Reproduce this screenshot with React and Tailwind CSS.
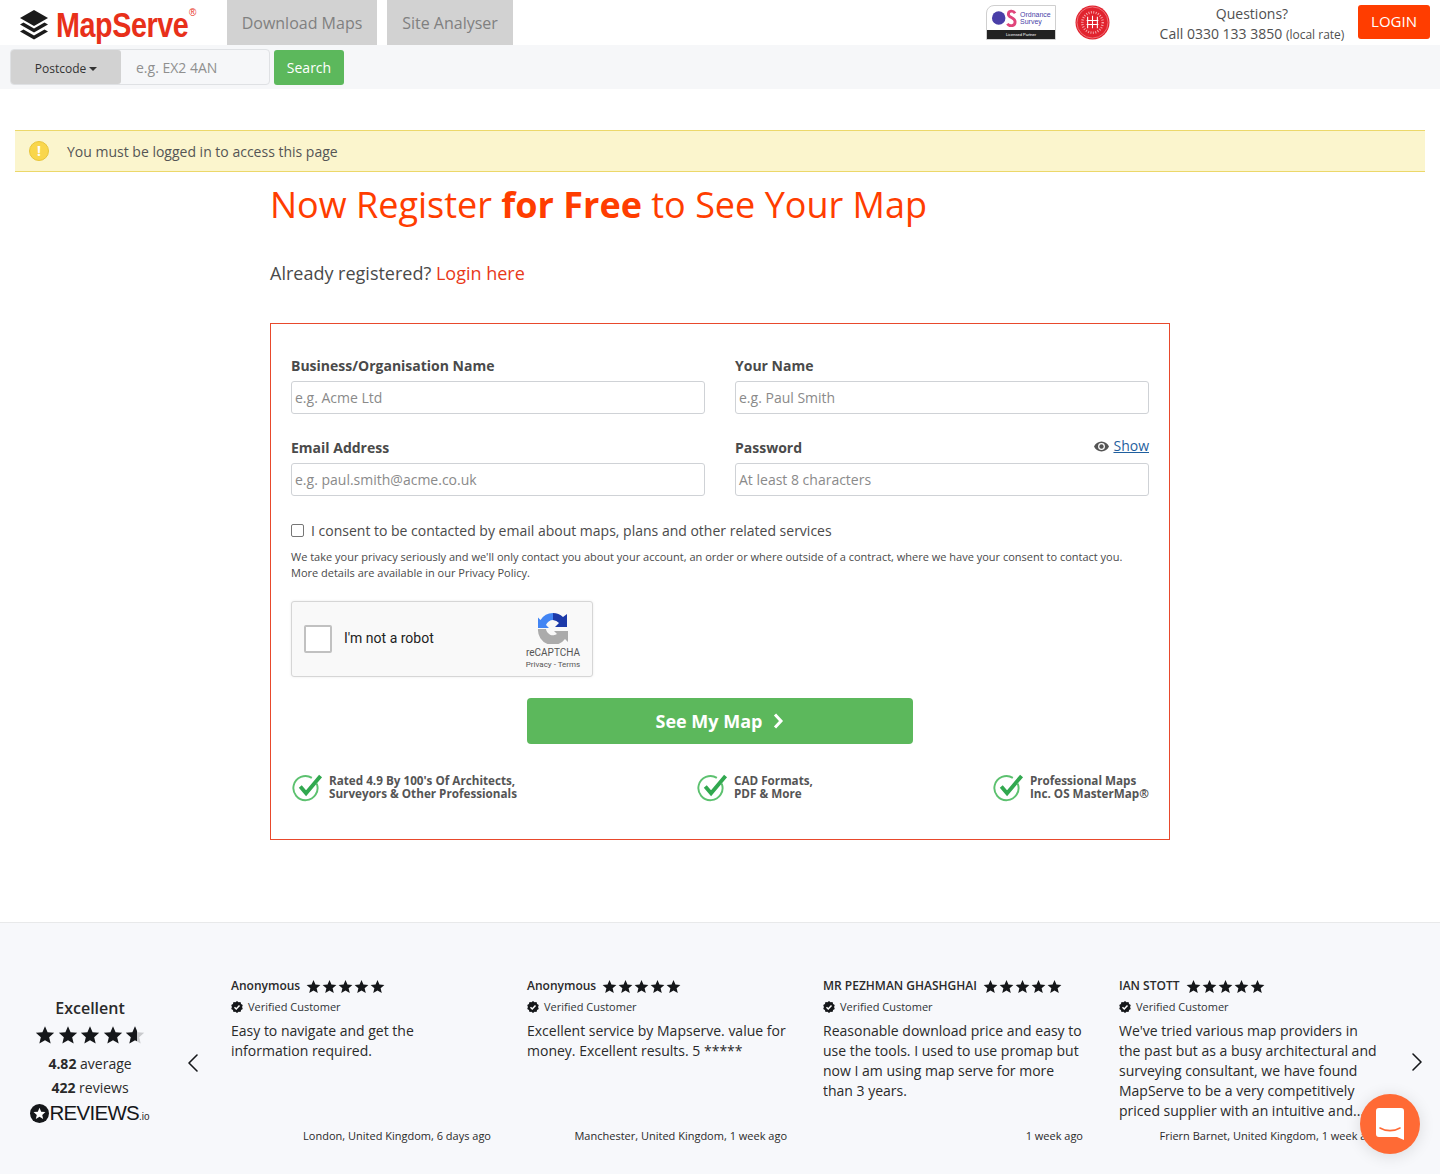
import { ChevronLeft, ChevronRight } from "lucide-react"

const sans = "font-['Open_Sans',sans-serif]"

function Star({ className = "w-[15px] h-[15px]" }) {
  return (
    <svg viewBox="0 0 24 24" className={className} fill="#15171a">
      <path d="M12 1.500l3.100 7.200 7.900.7-6 5.200 1.800 7.700L12 18.200l-6.800 4.100L7 14.600 1 9.400l7.900-.7z" />
    </svg>
  )
}

function BadgeCheck() {
  return (
    <svg viewBox="0 0 24 24" className="w-3 h-3 shrink-0">
      <path fill="#15171a" d="M12 0l3.100 2.400 3.900-.3 1.200 3.700 3.300 2.200L22.200 12l1.300 4-3.300 2.200-1.200 3.700-3.900-.3L12 24l-3.100-2.400-3.900.3-1.200-3.700L.5 16l1.300-4-1.300-4 3.300-2.200L5 2.100l3.900.3z" />
      <path fill="none" stroke="#fff" strokeWidth="3" d="M7 12.500l3.500 3.500L17 9" />
    </svg>
  )
}

function LayersLogo() {
  return (
    <svg viewBox="0 0 28 30" className="w-[28px] h-[30px]" fill="#1b1b1b">
      <path d="M14 0l14 8-14 8L0 8z" />
      <path d="M3.500 12.500L14 18.500l10.500-6 3.500 2-14 8-14-8z" />
      <path d="M3.500 19.500L14 25.500l10.500-6 3.500 2-14 8-14-8z" />
    </svg>
  )
}

function OsBadge() {
  return (
    <div className="w-[70px] h-[35px] flex flex-col border border-[#cfcfcf] rounded-tl-lg bg-white overflow-hidden">
      <div className="flex-1 flex items-center pl-1 gap-[2px]">
        <svg viewBox="0 0 28 18" className="w-[27px] h-[18px]">
          <circle cx="8" cy="9" r="7" fill="#4a3fa8" />
          <path d="M25 4c-2-3-7-3-7 1s7 3 7 8-6 5-8 2" fill="none" stroke="#e0457b" strokeWidth="3" />
        </svg>
        <div className="text-[7px] leading-[7px] text-[#4a3fa8] font-['Liberation_Sans',sans-serif]">
          Ordnance
          <br />
          Survey
        </div>
      </div>
      <div className="h-[9px] bg-[#222] text-[4px] leading-[9px] text-white text-center font-['Liberation_Sans',sans-serif]">
        Licensed Partner
      </div>
    </div>
  )
}

function RedSeal() {
  return (
    <svg viewBox="0 0 36 36" className="w-[35px] h-[35px]">
      <circle cx="18" cy="18" r="17.500" fill="#e1232e" />
      <circle cx="18" cy="18" r="16" fill="none" stroke="#f7a7ab" strokeWidth="0.6" />
      <circle cx="18" cy="18" r="10.500" fill="none" stroke="#f7a7ab" strokeWidth="2.500" strokeDasharray="1 1.500" />
      <path d="M13 12v12M18 11v13M23 12v12M12 16h12M12 20h12" stroke="#fff" strokeWidth="1.100" fill="none" />
    </svg>
  )
}

function CheckIcon() {
  return (
    <svg viewBox="0 0 32 30" className="w-[32px] h-[29px] shrink-0">
      <path d="M25 11a12.500 12.500 0 1 1-5-6" fill="none" stroke="#5cc16f" strokeWidth="2" />
      <path d="M8 14l6 7L29 3" fill="none" stroke="#31a84f" strokeWidth="4" />
    </svg>
  )
}

function Field({ label, placeholder, right }) {
  return (
    <div className="flex-1">
      <div className="flex justify-between items-end h-[22px] mb-[5px]">
        <label className="text-[14px] font-bold text-[#4a4a4a] leading-[20px]">{label}</label>
        {right}
      </div>
      <div className="h-[33px] border border-[#cfd2d6] rounded-[3px] px-[3px] flex items-center text-[14px] text-[#8a8a8a]">
        {placeholder}
      </div>
    </div>
  )
}

function Perk({ lines }) {
  return (
    <div className="flex items-center gap-[5px]">
      <CheckIcon />
      <div className="text-[11.7px] font-bold text-[#555] -mt-[2px]">
        <div className="h-[13px] leading-[13px]">{lines[0]}</div>
        <div className="h-[13px] leading-[13px]">{lines[1]}</div>
      </div>
    </div>
  )
}

function Review({ name, text, where }) {
  return (
    <div className="w-[296px] shrink-0 pr-[36px] h-[172px] flex flex-col">
      <div className="flex items-center gap-[6px] h-[18px]">
        <span className="text-[12px] font-semibold text-[#2a2a2a]">{name}</span>
        <span className="flex gap-[1px]">
          <Star />
          <Star />
          <Star />
          <Star />
          <Star />
        </span>
      </div>
      <div className="flex items-center gap-[5px] h-[16px] mt-[4px] text-[11px] text-[#2f3437]">
        <BadgeCheck />
        Verified Customer
      </div>
      <p className="mt-[6px] text-[14px] leading-[20px] text-[#2a2a2a] h-[100px] overflow-hidden">{text}</p>
      <div className="mt-[7px] text-[11px] text-right text-[#2a2a2a] whitespace-nowrap">{where}</div>
    </div>
  )
}

export default function App() {
  return (
    <div className={`${sans} relative w-[1440px] h-[1174px] overflow-hidden bg-white text-[#4a4a4a]`}>
      <header className="h-[45px] flex items-start">
        <div className="w-[227px] h-[45px] flex items-center pl-[20px] pt-[5px] gap-[8px]">
          <LayersLogo />
          <div className="relative">
            <span className="block origin-left scale-x-[.82] font-['Liberation_Sans',sans-serif] font-bold text-[#e8301a] text-[35px] leading-[36px] tracking-[-0.5px] whitespace-nowrap">
              MapServe
            </span>
            <span className="absolute left-[133px] -top-[2px] text-[10px] text-[#e8301a] font-['Liberation_Sans',sans-serif]">®</span>
          </div>
        </div>
        <div className="w-[150px] h-[45px] bg-[#d2d2d2] flex items-center justify-center text-[16px] text-[#808080]">Download Maps</div>
        <div className="ml-[10px] w-[126px] h-[45px] bg-[#d2d2d2] flex items-center justify-center text-[16px] text-[#808080]">Site Analyser</div>
        <div className="ml-auto flex items-center h-[45px] pr-[10px]">
          <OsBadge />
          <div className="ml-[19px]"><RedSeal /></div>
          <div className="ml-[49px] mt-[4px] w-[186px] text-center text-[14px] leading-[20px] text-[#505050]">
            Questions?
            <br />
            <span className="whitespace-nowrap">Call 0330 133 3850 <span className="text-[12px]">(local rate)</span></span>
          </div>
          <div className="ml-[13px] w-[72px] h-[34px] mb-[2px] bg-[#ff3d00] rounded-[3px] flex items-center justify-center text-white text-[15px]">LOGIN</div>
        </div>
      </header>

      <div className="h-[44px] bg-[#f6f7f9] flex items-center pl-[10px] gap-[4px]">
        <div className="w-[260px] h-[36px] border border-[#dfe1e4] rounded-[4px] flex">
          <div className="w-[110px] pt-[3px] bg-[#d2d2d2] rounded-[3px] flex items-center justify-center gap-[3px] text-[12px] text-[#333]">
            Postcode
            <span className="w-0 h-0 border-x-[4px] border-x-transparent border-t-[4px] border-t-[#333]"></span>
          </div>
          <div className="pl-[15px] flex items-center text-[14px] text-[#8f8f8f]">e.g. EX2 4AN</div>
        </div>
        <div className="w-[70px] h-[35px] bg-[#5cb85c] rounded-[3px] flex items-center justify-center text-white text-[14px]">Search</div>
      </div>

      <div className="mt-[41px] mx-[15px] h-[42px] bg-[#fbf5cd] border-y border-[#ecd86a] flex items-center pl-[14px]">
        <span className="w-[20px] h-[20px] rounded-full bg-[#f9d64c] border border-[#e8c53a] flex items-center justify-center text-white font-bold text-[14px] leading-none">!</span>
        <span className="ml-[18px] text-[14px] text-[#555]">You must be logged in to access this page</span>
      </div>

      <main className="w-[900px] mx-auto">
        <h1 className="mt-[8px] text-[36px] leading-[50px] text-[#ff3d00]">
          Now Register <strong className="font-bold">for Free</strong> to See Your Map
        </h1>
        <p className="mt-[30px] text-[18px] leading-[26px] text-[#4a4a4a]">
          Already registered? <span className="text-[#e8391a]">Login here</span>
        </p>

        <section className="mt-[37px] h-[517px] border border-[#e8492c] px-[20px] pt-[30px]">
          <div className="flex gap-[30px]">
            <Field label="Business/Organisation Name" placeholder="e.g. Acme Ltd" />
            <Field label="Your Name" placeholder="e.g. Paul Smith" />
          </div>
          <div className="flex gap-[30px] mt-[22px]">
            <Field label="Email Address" placeholder="e.g. paul.smith@acme.co.uk" />
            <Field
              label="Password"
              placeholder="At least 8 characters"
              right={
                <span className="flex items-center gap-[4px] text-[14px] leading-[22px] mb-[1px]">
                  <svg viewBox="0 0 24 16" className="w-[15px] h-[11px]" fill="#555">
                    <path fillRule="evenodd" d="M12 0C6.500 0 2 3.500 0 8c2 4.500 6.500 8 12 8s10-3.500 12-8c-2-4.500-6.500-8-12-8zm0 2.500a5.500 5.500 0 1 1 0 11 5.500 5.500 0 0 1 0-11z" />
                    <circle cx="12" cy="8" r="3.500" />
                  </svg>
                  <span className="text-[#1f5f9e] underline">Show</span>
                </span>
              }
            />
          </div>

          <div className="mt-[24px] flex items-center h-[20px] text-[14px] text-[#4a4a4a]">
            <span className="w-[13px] h-[13px] border border-[#767676] rounded-[2px] bg-white mr-[7px]"></span>
            I consent to be contacted by email about maps, plans and other related services
          </div>
          <p className="mt-[9px] text-[11px] leading-[16px] text-[#4a4a4a]">
            We take your privacy seriously and we'll only contact you about your account, an order or where outside of a contract, where we have your consent to contact you.
            <br />
            More details are available in our Privacy Policy.
          </p>

          <div className="mt-[20px] w-[302px] h-[76px] bg-[#f9f9f9] border border-[#d6d6d6] rounded-[3px] shadow-[0_0_3px_rgba(0,0,0,0.08)] flex items-center pl-[12px] font-['Roboto',sans-serif]">
            <span className="w-[28px] h-[28px] bg-white border-2 border-[#c1c1c1] rounded-[2px]"></span>
            <span className="ml-[12px] -mt-[2px] text-[14px] text-[#222]">I'm not a robot</span>
            <div className="ml-auto w-[78px] flex flex-col items-center pt-[5px] text-[#555]">
              <svg viewBox="0 0 32 32" className="w-[32px] h-[32px]">
                <path fill="#1c3aa9" d="M16 1a15 15 0 0 1 10 4l4-3v13H18l4-4a9 9 0 0 0-6-3z" />
                <path fill="#4285f4" d="M16 1A15 15 0 0 0 3.500 8L1 5.500V16h11l-3-3c1-3 4-5 7-5z" />
                <path fill="#ababab" d="M1 17h8a7 7 0 0 0 11 5l-3-3h14v11l-3-3A15 15 0 0 1 1 17z" />
              </svg>
              <span className="text-[10px] leading-[12px] mt-[3px]">reCAPTCHA</span>
              <span className="text-[8px] leading-[12px]">Privacy - Terms</span>
            </div>
          </div>

          <div className="mt-[21px] mx-auto w-[386px] h-[46px] bg-[#5cb85c] rounded-[4px] flex items-center justify-center gap-[10px] text-white text-[18px] font-bold">
            See My Map
            <svg viewBox="0 0 10 16" className="w-[12px] h-[16px]">
              <path d="M2 1.500L8 8l-6 6.500" fill="none" stroke="#fff" strokeWidth="3" />
            </svg>
          </div>

          <div className="mt-[29px] flex justify-between pl-px">
            <Perk lines={["Rated 4.9 By 100's Of Architects,", "Surveyors & Other Professionals"]} />
            <Perk lines={["CAD Formats,", "PDF & More"]} />
            <Perk lines={["Professional Maps", "Inc. OS MasterMap®"]} />
          </div>
        </section>
      </main>

      <footer className="mt-[82px] h-[252px] bg-[#f7f8fb] border-t border-[#e8e9ea] flex text-[#2a2a2a]">
        <div className="w-[180px] pt-[74px] flex flex-col items-center">
          <div className="text-[16px] leading-[22px] font-semibold">Excellent</div>
          <div className="mt-[6px] flex gap-[2.500px]">
            <Star className="w-[20px] h-[20px]" />
            <Star className="w-[20px] h-[20px]" />
            <Star className="w-[20px] h-[20px]" />
            <Star className="w-[20px] h-[20px]" />
            <span className="relative w-[20px] h-[20px]">
              <Star className="w-[20px] h-[20px] opacity-20" />
              <span className="absolute left-0 top-0 w-[12px] h-[20px] overflow-hidden">
                <Star className="w-[20px] h-[20px]" />
              </span>
            </span>
          </div>
          <div className="mt-[7px] text-[14px] leading-[24px]"><b>4.82</b> average</div>
          <div className="text-[14px] leading-[24px]"><b>422</b> reviews</div>
          <div className="flex items-center h-[24px] mt-px">
            <span className="w-[19px] h-[19px] rounded-full bg-[#15171a] flex items-center justify-center">
              <Star className="w-[13px] h-[13px] [&>path]:fill-white" />
            </span>
            <span className="text-[20.500px] tracking-[-0.7px] text-[#15171a] font-['Liberation_Sans',sans-serif]">REVIEWS</span>
            <span className="text-[10px] mt-[6px] font-['Liberation_Sans',sans-serif]">.io</span>
          </div>
        </div>
        <div className="w-[51px] pt-[124px] flex justify-center">
          <ChevronLeft className="w-[32px] h-[32px] ml-[-25px]" strokeWidth={1.200} color="#15171a" />
        </div>
        <div className="flex pt-[54px]">
          <Review name="Anonymous" text="Easy to navigate and get the information required." where="London, United Kingdom, 6 days ago" />
          <Review name="Anonymous" text="Excellent service by Mapserve. value for money. Excellent results. 5 *****" where="Manchester, United Kingdom, 1 week ago" />
          <Review name="MR PEZHMAN GHASHGHAI" text="Reasonable download price and easy to use the tools. I used to use promap but now I am using map serve for more than 3 years." where="1 week ago" />
          <Review name="IAN STOTT" text="We've tried various map providers in the past but as a busy architectural and surveying consultant, we have found MapServe to be a very competitively priced supplier with an intuitive and..." where="Friern Barnet, United Kingdom, 1 week ago" />
        </div>
        <div className="absolute left-[1401px] top-[1046px]">
          <ChevronRight className="w-[32px] h-[32px]" strokeWidth={1.200} color="#15171a" />
        </div>
      </footer>

      <div className="absolute left-[1360px] top-[1094px] w-[60px] h-[60px] rounded-full bg-[#ff6a35] shadow-[0_2px_16px_rgba(0,0,0,0.12)] flex items-center justify-center">
        <svg viewBox="0 0 28 32" className="w-[28px] h-[32px]">
          <path fill="#fff" d="M3 0h22a3 3 0 0 1 3 3v29l-7-3H3a3 3 0 0 1-3-3V3a3 3 0 0 1 3-3z" />
          <path fill="none" stroke="#ff6a35" strokeWidth="1.600" strokeLinecap="round" d="M4 20c6 3.500 14 3.500 20 0" />
        </svg>
      </div>
    </div>
  )
}
